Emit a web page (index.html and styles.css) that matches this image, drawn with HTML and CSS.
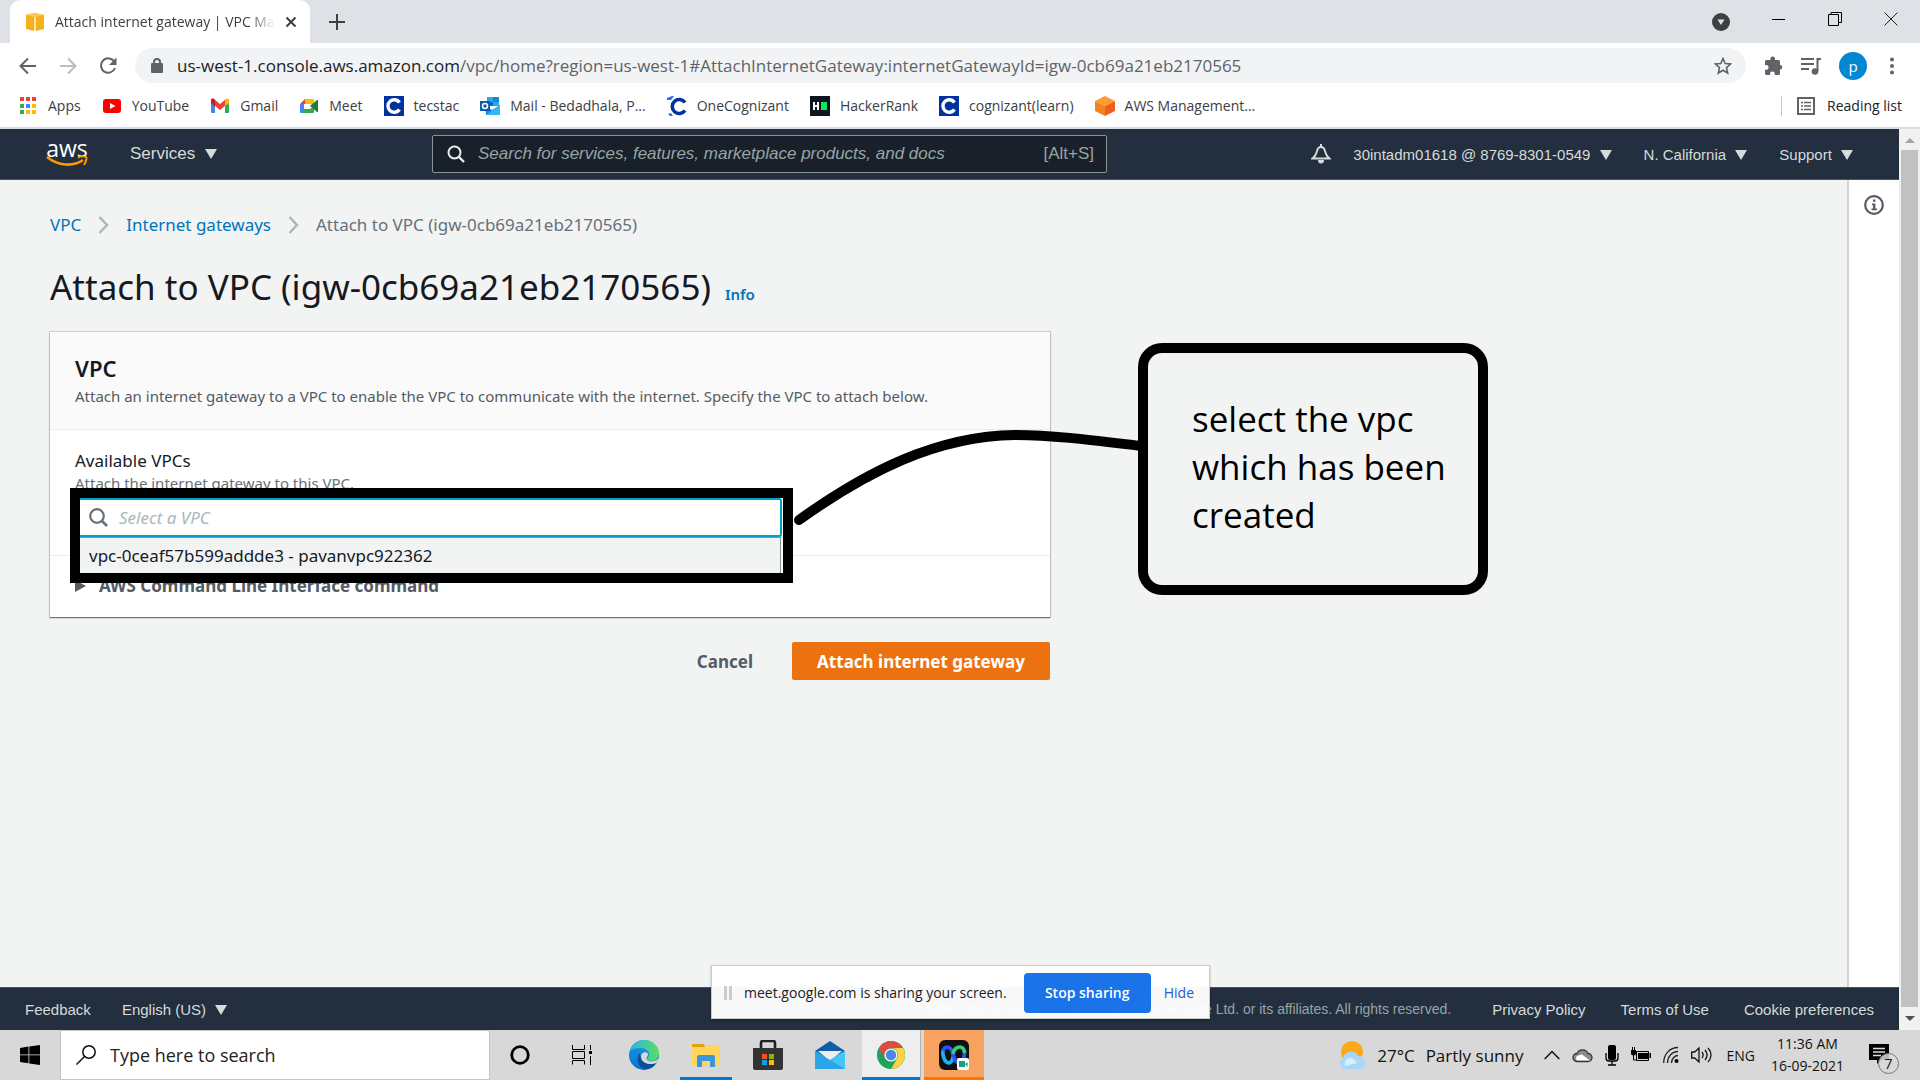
FILE: index.html
```html
<!DOCTYPE html>
<html lang="en">
<head>
<meta charset="utf-8">
<title>Attach internet gateway | VPC Management Console</title>
<link rel="stylesheet" href="styles.css">
</head>
<body>
<div class="tabstrip">
  <div class="tab">
    <svg class="tab-icon" width="20" height="20" viewBox="0 0 20 20"><path fill="#f5b01c" d="M1 3l8.500-2v18L1 17zM10.500 1L19 3v14l-8.500 2z"/><path fill="#fbc94d" d="M1 3l9-2 9 2-9 2.500z"/><path stroke="#fdeec4" d="M10 5.500V19" fill="none"/></svg>
    <span class="tab-title">Attach internet gateway | VPC Ma</span>
    <button class="icon-btn" aria-label="Close tab"><svg width="12" height="12" viewBox="0 0 12 12"><path d="M1.500 1.500l9 9m0-9l-9 9" stroke="#3c4043" stroke-width="2"/></svg></button>
  </div>
  <button class="icon-btn new-tab" aria-label="New tab"><svg width="16" height="16" viewBox="0 0 16 16"><path d="M8 0v16M0 8h16" stroke="#3c4043" stroke-width="2"/></svg></button>
  <div class="window-controls">
    <button class="icon-btn" aria-label="Search tabs"><svg width="18" height="18" viewBox="0 0 18 18"><circle cx="9" cy="9" r="9" fill="#3c4043"/><path d="M5.500 6.500h7L9 12z" fill="#dee1e6"/></svg></button>
    <button class="icon-btn win" aria-label="Minimize"><svg width="14" height="14" viewBox="0 0 14 14"><path d="M0 7.500h13" stroke="#000"/></svg></button>
    <button class="icon-btn win" aria-label="Restore"><svg width="14" height="14" viewBox="0 0 14 14"><path d="M.5 2.500h10v11H.5zM3 2.500v-2h10.500v10H11" fill="none" stroke="#000"/></svg></button>
    <button class="icon-btn win" aria-label="Close"><svg width="14" height="14" viewBox="0 0 14 14"><path d="M.5 .5l13 13m0-13l-13 13" stroke="#222"/></svg></button>
  </div>
</div>

<div class="toolbar">
  <div class="nav-buttons">
    <button class="icon-btn" aria-label="Back"><svg width="18" height="18" viewBox="0 0 18 18"><path d="M17 9H2m7-7.500L1.500 9 9 16.500" fill="none" stroke="#5f6368" stroke-width="2"/></svg></button>
    <button class="icon-btn" aria-label="Forward"><svg width="18" height="18" viewBox="0 0 18 18"><path d="M1 9h15M9 1.500L16.500 9 9 16.500" fill="none" stroke="#bbbdc0" stroke-width="2"/></svg></button>
    <button class="icon-btn" aria-label="Reload"><svg width="18" height="18" viewBox="0 0 18 18"><path d="M15.500 5A7.200 7.200 0 1 0 16 11" fill="none" stroke="#5f6368" stroke-width="2"/><path d="M17.500 .5v7.500H10z" fill="#5f6368"/></svg></button>
  </div>
  <div class="omnibox">
    <svg width="12" height="15" viewBox="0 0 12 15"><rect y="5" width="12" height="10" rx="1" fill="#5f6368"/><path d="M3 6V4a3 3 0 0 1 6 0v2" fill="none" stroke="#5f6368" stroke-width="2"/></svg>
    <span class="url"><b>us-west-1.console.aws.amazon.com</b>/vpc/home?region=us-west-1#AttachInternetGateway:internetGatewayId=igw-0cb69a21eb2170565</span>
    <button class="icon-btn" aria-label="Bookmark this page"><svg width="18" height="18" viewBox="0 0 18 18"><path d="M9 1.500l2.200 5 5.300.5-4 3.600 1.200 5.400L9 13.200 4.300 16l1.200-5.400-4-3.600 5.300-.5z" fill="none" stroke="#5f6368" stroke-width="1.600"/></svg></button>
  </div>
  <button class="icon-btn" aria-label="Extensions"><svg width="19" height="19" viewBox="0 0 19 19"><path fill="#5f6368" d="M16 9V5.500A1.500 1.500 0 0 0 14.500 4H11V2.800a2.300 2.300 0 0 0-4.600 0V4H2.500A1.500 1.500 0 0 0 1 5.500V9h1.200a2.400 2.400 0 0 1 0 4.800H1v3.700A1.500 1.500 0 0 0 2.500 19H6v-1.200a2.400 2.400 0 0 1 4.800 0V19h3.700a1.500 1.500 0 0 0 1.500-1.500v-3.900a2.300 2.300 0 0 0 0-4.600z"/></svg></button>
  <button class="icon-btn" aria-label="Media controls"><svg width="20" height="18" viewBox="0 0 20 18"><path d="M0 2h13M0 7h13M0 12h8" stroke="#5f6368" stroke-width="2"/><path d="M16.500 14V2H20" fill="none" stroke="#5f6368" stroke-width="2"/><circle cx="14" cy="14.500" r="3.300" fill="#5f6368"/></svg></button>
  <button class="avatar">p</button>
  <button class="icon-btn kebab" aria-label="Menu"><svg width="4" height="18" viewBox="0 0 4 18"><g fill="#5f6368"><circle cx="2" cy="2.500" r="2"/><circle cx="2" cy="9" r="2"/><circle cx="2" cy="15.500" r="2"/></g></svg></button>
</div>

<nav class="bookmarks">
  <a href="#"><svg width="18" height="20" viewBox="0 0 18 20"><path fill="#ea4335" d="M0 1h4v4H0zM6 1h4v4H6zM12 1h4v4h-4z"/><path fill="#34a853" d="M0 8h4v4H0z"/><path fill="#4285f4" d="M6 8h4v4H6z"/><path fill="#fbbc04" d="M12 8h4v4h-4zM6 14h4v4H6zM12 14h4v4h-4z"/><path fill="#34a853" d="M0 14h4v4H0z"/></svg>Apps</a>
  <a href="#"><svg width="20" height="20" viewBox="0 0 20 20"><rect x="1" y="3" width="18" height="14" rx="3" fill="#f00"/><path d="M8 7l5.500 3L8 13z" fill="#fff"/></svg>YouTube</a>
  <a href="#"><svg width="20" height="20" viewBox="0 0 20 20"><path fill="#4285f4" d="M1 6h4v11H2a1 1 0 0 1-1-1z"/><path fill="#34a853" d="M15 6h4v10a1 1 0 0 1-1 1h-3z"/><path fill="#ea4335" d="M1 4c0-1 2-2 3-1l6 5 6-5v6l-6 5-5-4-4-3z"/><path fill="#c5221f" d="M1 4c0-1 2-2 4 0v6L1 7z"/><path fill="#fbbc04" d="M19 4c0-1-2-2-4 0v6l4-3z"/></svg>Gmail</a>
  <a href="#"><svg width="20" height="20" viewBox="0 0 20 20"><path fill="#ea4335" d="M1 8l5-5v5z"/><path fill="#fbbc04" d="M6 3h8a1 1 0 0 1 1 1v6l-4-2H6z"/><path fill="#4285f4" d="M1 8h4v9H2a1 1 0 0 1-1-1z"/><path fill="#34a853" d="M5 13h6l4-3v6a1 1 0 0 1-1 1H5z"/><path fill="#188038" d="M11 10l7-6h1v12h-1z"/></svg>Meet</a>
  <a href="#"><svg width="20" height="20" viewBox="0 0 20 20"><path fill="#0033a0" d="M0 0h20v20H0z"/><path d="M15.500 6.500a6.300 6.300 0 1 0 0 7" fill="none" stroke="#fff" stroke-width="3.400"/></svg>tecstac</a>
  <a href="#"><svg width="20" height="20" viewBox="0 0 20 20"><path fill="#0a6ac9" d="M7 1h12v9H7z"/><path fill="#28a8ea" d="M7 1h6v5H7zM13 6h6v4h-6z"/><path fill="#1a86d9" d="M13 1h6v5h-6z"/><path fill="#1490df" d="M5 9l7 5 8-5v9a1 1 0 0 1-1 1H6z"/><path fill="#35b8f1" d="M6 19L20 9v9a1 1 0 0 1-1 1z"/><path fill="#0a5aae" d="M0 5h10v10H0z"/><circle cx="5" cy="10" r="2.500" fill="none" stroke="#fff" stroke-width="1.600"/></svg>Mail - Bedadhala, P...</a>
  <a href="#"><svg width="20" height="20" viewBox="0 0 20 20"><path d="M18 6.500a7 7 0 1 0 0 8" fill="none" stroke="#0033a0" stroke-width="3.600"/><path fill="#2f6bff" d="M0 4V2l5-2h2L4 4zM1 18l3-1 2 3H3z"/></svg>OneCognizant</a>
  <a href="#"><svg width="20" height="20" viewBox="0 0 20 20"><path fill="#0e141e" d="M0 0h20v20H0z"/><path fill="#00ea64" d="M11 6h6v8h-6z"/><path fill="#fff" d="M3 6h2v3h2V6h2v8H7v-3H5v3H3z"/></svg>HackerRank</a>
  <a href="#"><svg width="20" height="20" viewBox="0 0 20 20"><path fill="#0033a0" d="M0 0h20v20H0z"/><path d="M15.500 6.500a6.300 6.300 0 1 0 0 7" fill="none" stroke="#fff" stroke-width="3.400"/></svg>cognizant(learn)</a>
  <a href="#"><svg width="20" height="20" viewBox="0 0 20 20"><path fill="#ff9a2e" d="M10 0l10 5-10 5L0 5z"/><path fill="#f58220" d="M0 5l10 5v10L0 15z"/><path fill="#ec5f1c" d="M20 5l-10 5v10l10-5z"/></svg>AWS Management...</a>
  <a href="#" class="reading"><svg width="18" height="18" viewBox="0 0 18 18"><path d="M1 1h16v16H1z" fill="none" stroke="#5f6368" stroke-width="2"/><path d="M4 5.500h2m1 0h7M4 9h2m1 0h7M4 12.500h2m1 0h7" stroke="#5f6368" stroke-width="1.600"/></svg>Reading list</a>
</nav>

<div class="viewport">
  <div class="console">
    <header class="aws-header">
      <a href="#" class="aws-logo" aria-label="AWS home"><span>aws</span><svg width="42" height="12" viewBox="0 0 42 12"><path d="M1 1c11 9 26 10 36 3" fill="none" stroke="#ff9900" stroke-width="2.600"/><path d="M32 1.500c3-1.500 7-1.500 8-.5s0 5-2 8" fill="none" stroke="#ff9900" stroke-width="2"/></svg></a>
      <button class="menu services">Services <i class="caret"></i></button>
      <label class="aws-search">
        <svg width="18" height="18" viewBox="0 0 18 18"><circle cx="7.500" cy="7.500" r="6" fill="none" stroke="#eaeded" stroke-width="2"/><path d="M12 12l5 5" stroke="#eaeded" stroke-width="2.400"/></svg>
        <input type="text" placeholder="Search for services, features, marketplace products, and docs" aria-label="Search services">
        <span>[Alt+S]</span>
      </label>
      <div class="aws-right">
        <button class="icon-btn" aria-label="Notifications"><svg width="20" height="20" viewBox="0 0 20 20"><path d="M1.500 14.500C5 12 5 10 6 7c.6-2.500 2-4 4-4s3.400 1.500 4 4c1 3 1 5 4.500 7.500z" fill="none" stroke="#d5dbdb" stroke-width="2"/><path d="M9 0h2v3H9zM7 16h6a3 3.500 0 0 1-6 0z" fill="#d5dbdb"/></svg></button>
        <button class="menu">30intadm01618 @ 8769-8301-0549 <i class="caret"></i></button>
        <button class="menu">N. California <i class="caret"></i></button>
        <button class="menu">Support <i class="caret"></i></button>
      </div>
    </header>
    <div class="workspace">
      <main class="content">
        <nav class="crumbs">
          <a href="#">VPC</a>
          <svg width="11" height="18" viewBox="0 0 11 18"><path d="M1.500 1L9 9l-7.500 8" fill="none" stroke="#aab7b8" stroke-width="2.400"/></svg>
          <a href="#">Internet gateways</a>
          <svg width="11" height="18" viewBox="0 0 11 18"><path d="M1.500 1L9 9l-7.500 8" fill="none" stroke="#aab7b8" stroke-width="2.400"/></svg>
          <span>Attach to VPC (igw-0cb69a21eb2170565)</span>
        </nav>
        <div class="title"><h1>Attach to VPC (igw-0cb69a21eb2170565)</h1><a href="#">Info</a></div>
        <form class="form">
          <section class="card">
            <header class="card-head">
              <h2>VPC</h2>
              <p>Attach an internet gateway to a VPC to enable the VPC to communicate with the internet. Specify the VPC to attach below.</p>
            </header>
            <div class="card-body">
              <label for="vpc">Available VPCs</label>
              <p>Attach the internet gateway to this VPC.</p>
              <div class="combo">
                <div class="combo-box">
                  <svg width="19" height="19" viewBox="0 0 19 19"><circle cx="8" cy="8" r="6.800" fill="none" stroke="#687078" stroke-width="2.200"/><path d="M13 13l5 5" stroke="#687078" stroke-width="2.600"/></svg>
                  <input id="vpc" type="text" placeholder="Select a VPC">
                </div>
                <div class="options" role="listbox"><div role="option">vpc-0ceaf57b599addde3 - pavanvpc922362</div></div>
                <div class="frame"></div>
                <svg class="connector" width="350" height="100" viewBox="0 0 350 100"><path d="M8 91C75 43 145 7 224 6c40 0 84 6 126 11" fill="none" stroke="#000" stroke-width="10" stroke-linecap="round"/></svg>
                <div class="callout">select the vpc which has been created</div>
              </div>
            </div>
            <details class="cli"><summary>AWS Command Line Interface command</summary></details>
          </section>
          <div class="actions">
            <button type="button" class="cancel">Cancel</button>
            <button type="button" class="primary">Attach internet gateway</button>
          </div>
        </form>
      </main>
      <aside class="help"><button class="icon-btn" aria-label="Open help"><svg width="20" height="20" viewBox="0 0 20 20"><circle cx="10" cy="10" r="8.800" fill="none" stroke="#545b64" stroke-width="2.200"/><path d="M9 4.500h2.400v2.300H9zM8 8.500h3.400v5H13v1.800H7.500v-1.800H9v-3.200H8z" fill="#545b64"/></svg></button></aside>
    </div>
    <footer class="aws-footer">
      <a href="#">Feedback</a>
      <button class="menu">English (US) <i class="caret"></i></button>
      <span class="legal">© 2008 - 2021, Amazon Internet Services Private Ltd. or its affiliates. All rights reserved.</span>
      <a href="#">Privacy Policy</a>
      <a href="#">Terms of Use</a>
      <a href="#">Cookie preferences</a>
    </footer>
    <div class="sharing">
      <i class="grip"></i>
      <span>meet.google.com is sharing your screen.</span>
      <button class="stop">Stop sharing</button>
      <a href="#">Hide</a>
    </div>
  </div>
  <div class="scrollbar"><i class="up"></i><i class="thumb"></i><i class="down"></i></div>
</div>

<div class="taskbar">
  <button class="task start" aria-label="Start"><svg width="20" height="20" viewBox="0 0 20 20"><path d="M0 3l8.500-1.500v8H0zM9.300 1.400L20 0v9.500H9.300zM0 10.300h8.500v8L0 17zM9.300 10.300H20V20L9.300 18.500z"/></svg></button>
  <label class="task-search">
    <svg width="20" height="20" viewBox="0 0 20 20"><circle cx="13" cy="7" r="6.200" fill="none" stroke="#111" stroke-width="1.500"/><path d="M8.500 11.500L.5 19.500" stroke="#111" stroke-width="1.500"/></svg>
    <input type="text" placeholder="Type here to search" aria-label="Type here to search">
  </label>
  <button class="task" aria-label="Cortana"><svg width="20" height="20" viewBox="0 0 20 20"><circle cx="10" cy="10" r="8.300" fill="none" stroke="#000" stroke-width="2.800"/></svg></button>
  <button class="task" aria-label="Task view"><svg width="20" height="20" viewBox="0 0 20 20"><path d="M.5 0v4.500h12V0M.5 19.500v-4h12v4M.5 6.500h12v7H.5zM18.500 0v5M18.500 11v9" fill="none" stroke="#000"/><path d="M17 6h3v3h-3z"/></svg></button>
  <button class="task" aria-label="Edge"><svg width="30" height="30" viewBox="0 0 30 30"><defs><linearGradient id="e1" x1="0" x2="1"><stop stop-color="#2ab4ea"/><stop offset="1" stop-color="#5be05a"/></linearGradient><linearGradient id="e2" y2="1" x2="0"><stop stop-color="#1a9be6"/><stop offset="1" stop-color="#0b6fd0"/></linearGradient></defs><circle cx="15" cy="15" r="15" fill="url(#e2)"/><path d="M1 11C3 4 9 0 15 0c9 0 15 7 15 13 0 5-4 8-8 8-3 0-4-1-4-2s2-2 2-5c0-3-4-6-9-6-4 0-8 1-10 3z" fill="url(#e1)"/><path d="M11 13c-4 4-3 12 3 16 6 1 11-2 13.500-7-3 1.500-6 1.700-8.500 1-5-1-8-4-8-10z" fill="#0a4f9e"/><path d="M12 16c0-4 6-5 7-2 .5 2-2 3-1.500 5 .5 2 3 2.500 6 2.200 2.500-.2 4.500-1.500 6.500-3.200L28 22.500c-4 2-9 2-12 .3C13 21.500 12 19 12 16z" fill="#d8d8d8"/></svg></button>
  <button class="task open" aria-label="File Explorer"><svg width="28" height="24" viewBox="0 0 28 24"><path fill="#e5a00d" d="M0 1h12l1 3H0z"/><path fill="#ffd65c" d="M0 4h13l2-2h13v20a1 1 0 0 1-1 1H1a1 1 0 0 1-1-1z"/><path fill="#3b97dd" d="M5 24V14a2 2 0 0 1 2-2h14a2 2 0 0 1 2 2v10h-5v-6h-8v6z"/></svg></button>
  <button class="task" aria-label="Store"><svg width="30" height="30" viewBox="0 0 30 30"><path d="M8 10V3a2 2 0 0 1 2-2h10a2 2 0 0 1 2 2v7" fill="none" stroke="#222" stroke-width="2.600"/><path fill="#333" d="M0 8h30v20a2 2 0 0 1-2 2H2a2 2 0 0 1-2-2z"/><path fill="#f25022" d="M9 14h5v5H9z"/><path fill="#7fba00" d="M16 14h5v5h-5z"/><path fill="#00a4ef" d="M9 20h5v5H9z"/><path fill="#ffb900" d="M16 20h5v5h-5z"/></svg></button>
  <button class="task" aria-label="Mail"><svg width="30" height="28" viewBox="0 0 30 28"><path fill="#0f5ea8" d="M0 10L15 0l15 10-15 9z"/><path fill="#eee" d="M3 10h24L15 20z"/><path fill="#2aa5e6" d="M0 10l15 9 15-9v18H0z"/><path fill="#41c7f5" d="M30 10v18L15 19z"/></svg></button>
  <button class="task open active" aria-label="Chrome"><svg width="28" height="28" viewBox="0 0 28 28"><circle cx="14" cy="14" r="14" fill="#1ea35b"/><path fill="#e04a3f" d="M1.900 7A14 14 0 0 1 26.100 7H14a7 7 0 0 0-6 3.500L8 17.500z"/><path fill="#fdd247" d="M26.100 7A14 14 0 0 1 14 28l6.100-10.500A7 7 0 0 0 14 7z"/><circle cx="14" cy="14" r="6.600" fill="#f4f4f4"/><circle cx="14" cy="14" r="5.200" fill="#4a86e8"/></svg></button>
  <button class="task webex" aria-label="Webex"><svg width="30" height="30" viewBox="0 0 30 30"><rect width="30" height="30" rx="6" fill="#111114"/><path d="M4 10c-1 6 2 13 6 13 4-1 5-8 4-12" fill="none" stroke="#19b4f0" stroke-width="3.600"/><path d="M4 11c1-5 7-5 9 0 2 6 3 12 7 12 5-1 6-8 5-13" fill="none" stroke="#2b56f0" stroke-width="3.600"/><path d="M14 14c1-5 4-7 7-7 3 0 4 2 5 6" fill="none" stroke="#36d07c" stroke-width="3.600"/><rect x="18" y="18" width="12" height="12" rx="2" fill="#fff"/><path fill="#1a9d7a" d="M20 21h6v6h-6zM26 24l2.500-2v5z"/></svg></button>
  <div class="tray">
    <button class="weather"><svg width="28" height="29" viewBox="0 0 28 29"><circle cx="14" cy="11" r="11" fill="#fba919"/><path fill="#a9d8f7" d="M6 28a6 6 0 0 1-1-11 8 8 0 0 1 15-2 6.500 6.500 0 0 1 2 13z"/><path fill="#d9effc" d="M7 25a6 6 0 0 1 5-8c3 0 5 2 7 5z"/></svg><span>27°C</span><span>Partly sunny</span></button>
    <div class="tray-icons">
      <svg width="16" height="10" viewBox="0 0 16 10"><path d="M.7 9L8 1.500 15.300 9" fill="none" stroke="#111" stroke-width="1.500"/></svg>
      <svg width="21" height="16" viewBox="0 0 21 16"><path d="M5 14.500a4 4 0 0 1 0-8 6 6 0 0 1 11 0 4 4 0 0 1 0 8z" fill="#8c8c8c" stroke="#333" stroke-width="1.300"/><path d="M5 13.500a3 3 0 0 1 1-5l4-1 8 6z" fill="#fff"/></svg>
      <svg width="14" height="21" viewBox="0 0 14 21"><rect x="3" width="8" height="15" rx="2"/><path d="M1 8v5a3 3 0 0 0 3 3h6a3 3 0 0 0 3-3V8M7 16v4M3 20h8" fill="none" stroke="#000" stroke-width="1.300"/></svg>
      <svg width="20" height="16" viewBox="0 0 20 16"><path d="M7 6h10v6H7zM0 3h5v3a2.500 2.500 0 0 1-5 0zM1 0h1v3H1zM3 0h1v3H3zM18.500 6H20v5h-1.500z"/><path d="M5.500 4.500h12v9h-12zM2.500 7v6H5" fill="none" stroke="#000"/></svg>
      <svg width="16" height="18" viewBox="0 0 16 18"><path d="M.7 17C.7 8 7 1.500 15 1.500M4.500 17C4.500 10.500 9 5.500 15 5.500M8.500 17c0-4 3-7.500 6.500-7.500" fill="none" stroke="#222" stroke-width="1.300"/><circle cx="13.500" cy="15" r="2"/></svg>
      <svg width="21" height="18" viewBox="0 0 21 18"><path d="M.7 6h3L8 2v14l-4.300-4h-3zM11 6c1.500 2 1.500 4 0 6M14 4c2.500 3 2.500 7 0 10M17 2c4 4 4 10 0 14" fill="none" stroke="#111" stroke-width="1.300"/></svg>
    </div>
    <span class="lang">ENG</span>
    <div class="clock"><span>11:36 AM</span><span>16-09-2021</span></div>
    <button class="notif" aria-label="Notifications"><svg width="32" height="32" viewBox="0 0 32 32"><path d="M1 1h20v16h-8l-4 4v-4H1z"/><path d="M5 5.500h12M5 9h12M5 12.500h8" stroke="#ddd" stroke-width="1.500"/><circle cx="20.500" cy="20.500" r="10" fill="#d9d9d9" fill-opacity=".85" stroke="#777"/></svg><span>7</span></button>
  </div>
</div>
</body>
</html>
```
FILE: styles.css
```css
* { box-sizing: border-box; }
body { margin: 0; height: 100vh; display: flex; flex-direction: column; overflow: hidden; background: #fff; font-family: "Open Sans", "Noto Sans", sans-serif; color: #16191f; }
button, input { font: inherit; color: inherit; border: 0; padding: 0; background: none; }
a { text-decoration: none; color: inherit; }
svg { display: block; flex: none; }
h1, h2, p { margin: 0; font-weight: 400; }
.icon-btn { display: flex; align-items: center; justify-content: center; }

.tabstrip { height: 43px; flex: none; display: flex; align-items: center; background: #dee1e6; font-size: 14px; }
.tab { align-self: stretch; width: 300px; margin-left: 10px; padding: 0 15px; display: flex; align-items: center; gap: 10px; background: #fff; border-radius: 10px 10px 0 0; color: #3c4043; }
.tab-title { flex: 1; white-space: nowrap; -webkit-mask-image: linear-gradient(90deg, #000 88%, transparent); mask-image: linear-gradient(90deg, #000 88%, transparent); }
.new-tab { margin-left: 19px; }
.window-controls { margin-left: auto; display: flex; align-items: center; padding-right: 22px; gap: 42px; }
.win { width: 14px; height: 20px; align-items: flex-start; }

.toolbar { height: 45px; flex: none; display: flex; align-items: center; padding: 0 26px 0 19px; gap: 18px; }
.nav-buttons { display: flex; gap: 22px; }
.omnibox { flex: 1; height: 35px; display: flex; align-items: center; gap: 14px; padding: 0 14px 0 16px; background: #f1f3f4; border-radius: 18px; font-size: 17px; color: #5f6368; }
.url { flex: 1; white-space: nowrap; overflow: hidden; }
.url b { font-weight: 400; color: #202124; }
.avatar { width: 28px; height: 28px; border-radius: 50%; background: #0288d1; color: #fff; font-size: 15px; line-height: 24px; }
.kebab { margin-left: 5px; }

.bookmarks { height: 41px; flex: none; display: flex; align-items: center; gap: 21px; padding: 0 18px 4px 20px; border-bottom: 2px solid #dadce0; font-size: 14px; color: #3c4043; white-space: nowrap; }
.bookmarks a { display: flex; align-items: center; gap: 10px; }
.bookmarks .reading { margin-left: auto; height: 20px; padding-left: 15px; gap: 12px; border-left: 1px solid #c4c7cc; color: #202124; }

.viewport { flex: 1; min-height: 0; display: flex; }
.console { flex: 1; min-width: 0; display: flex; flex-direction: column; position: relative; }
.caret { display: inline-block; margin-left: 5px; border: 6px solid transparent; border-top: 10px solid #d5dbdb; border-bottom: 0; }
.menu { white-space: nowrap; }

.aws-header { height: 51px; flex: none; display: flex; align-items: center; padding: 0 46px; background: #232f3e; border-bottom: 1px solid #49525e; font-family: "Liberation Sans", Arial, sans-serif; font-size: 15px; color: #d5dbdb; }
.aws-logo { width: 42px; color: #fff; font: 500 23px/16px "Open Sans", sans-serif; text-align: center; }
.services { margin-left: 42px; font-size: 17px; width: 302px; text-align: left; }
.aws-search { width: 675px; height: 38px; display: flex; align-items: center; gap: 13px; padding: 0 12px 0 14px; border: 1px solid #879596; border-radius: 2px; background: #1a2029; color: #95a5a6; font-size: 17px; }
.aws-search input { flex: 1; outline: 0; font-style: italic; }
.aws-search input::placeholder { color: #95a5a6; opacity: 1; }
.aws-right { margin-left: auto; display: flex; align-items: center; gap: 32px; }
.aws-right .icon-btn { margin-right: -10px; }

.workspace { flex: 1; min-height: 0; display: flex; background: #f2f3f3; font-family: "Noto Sans", "Open Sans", sans-serif; }
.content { flex: 1; padding: 33px 50px; }
.help { width: 52px; border-left: 2px solid #d0d4d6; background: #fff; padding-top: 15px; display: flex; justify-content: center; align-items: flex-start; }
.crumbs { display: flex; align-items: center; gap: 17px; font-size: 17px; line-height: 24px; color: #687078; white-space: nowrap; }
.crumbs a { color: #0073bb; }
.title { display: flex; align-items: baseline; gap: 14px; margin-top: 27px; white-space: nowrap; }
.title h1 { font-size: 35px; line-height: 46px; }
.title a { font-size: 15px; font-weight: 600; color: #0073bb; }
.form { width: 1000px; margin-top: 22px; }
.card { background: #fff; box-shadow: 0 1px 1px 0 rgba(0,28,36,.5), 0 0 1px 1px rgba(0,28,36,.15); }
.card-head { padding: 21px 25px 19px; background: #fafafa; border-bottom: 1px solid #eaeded; }
.card-head h2 { font-size: 22px; font-weight: 600; line-height: 30px; }
.card-head p, .card-body p { font-size: 15px; line-height: 27px; color: #545b64; white-space: nowrap; }
.card-body { padding: 19px 25px 18px; border-bottom: 1px solid #eaeded; }
.card-body label { display: block; font-size: 17px; line-height: 24px; }
.card-body p { line-height: 20px; color: #687078; }
.combo { position: relative; width: 707px; margin-top: 5px; height: 39px; }
.combo-box { height: 39px; display: flex; align-items: center; gap: 11px; padding-left: 12px; border: 2px solid #00a1c9; border-radius: 3px; background: #fff; font-size: 17px; }
.combo input { flex: 1; outline: 0; }
.combo input::placeholder { color: #aab7b8; opacity: 1; font-style: italic; }
.options { position: absolute; z-index: 1; top: 39px; left: 0; right: 1px; height: 37px; padding-left: 13px; border: 1px solid #879596; background: #f2f3f3; font-size: 17px; line-height: 35px; }
.frame { position: absolute; z-index: 2; left: -5px; top: -10px; width: 723px; height: 95px; border: 10px solid #000; }
.connector { position: absolute; z-index: 2; left: 716px; top: -69px; }
.callout { position: absolute; z-index: 2; left: 1063px; top: -155px; width: 350px; height: 252px; padding: 42px 25px 42px 44px; border: 10px solid #000; border-radius: 24px; color: #000; font-family: "Open Sans", sans-serif; font-size: 35px; line-height: 48px; }
.cli { padding: 17px 25px 18px; font-size: 17px; font-weight: 700; line-height: 26px; color: #545b64; }
.cli summary { list-style: none; display: flex; align-items: center; gap: 13px; }
.cli summary::before { content: ""; border: 6px solid transparent; border-left: 11px solid #545b64; border-right: 0; }
.actions { display: flex; justify-content: flex-end; align-items: center; gap: 39px; margin-top: 25px; font-size: 17px; font-weight: 700; }
.cancel { color: #545b64; }
.primary { height: 38px; width: 258px; border-radius: 2px; background: #ec7211; color: #fff; }

.aws-footer { height: 43px; flex: none; display: flex; align-items: center; gap: 35px; padding: 0 25px; background: #232f3e; border-top: 1px solid #49525e; font: 15px "Liberation Sans", Arial, sans-serif; color: #d5dbdb; white-space: nowrap; }
.aws-footer .menu { margin-left: -4px; }
.legal { margin-left: auto; margin-right: 6px; font-size: 14px; color: #95a5a6; }
.sharing { position: absolute; left: 711px; bottom: 11px; width: 499px; height: 54px; display: flex; align-items: center; padding: 1px 15px 0 12px; background: rgba(255,255,255,.97); border: 1px solid #c9cccd; box-shadow: 0 1px 2px rgba(0,0,0,.3); font-size: 14px; white-space: nowrap; color: #202124; }
.grip { width: 8px; height: 14px; margin-right: 12px; border: solid #ccc; border-width: 0 3px; }
.stop { width: 127px; height: 40px; margin-left: auto; border-radius: 4px; background: #1a73e8; color: #fff; font-weight: 600; }
.sharing a { margin-left: 13px; color: #1a5fd8; }

.scrollbar { width: 21px; flex: none; display: flex; flex-direction: column; align-items: center; padding: 9px 0; background: #f1f1f1; }
.up { border: 5px solid transparent; border-bottom: 5px solid #a3a3a3; border-top: 0; }
.thumb { flex: 1; width: 17px; margin: 7px 0 9px; background: #c1c1c1; }
.down { border: 5px solid transparent; border-top: 5px solid #505050; border-bottom: 0; }

.taskbar { height: 50px; flex: none; display: flex; background: #d8d8d8; color: #111; }
.task { width: 60px; margin-right: 2px; display: flex; align-items: center; justify-content: center; border-bottom: 3px solid transparent; border-top: 3px solid transparent; }
.start { margin: 0; }
.task-search { width: 430px; display: flex; align-items: center; gap: 14px; padding: 0 15px; background: #fff; border: 1px solid #c4c4c4; font-size: 18px; }
.task-search input { flex: 1; outline: 0; }
.task-search input::placeholder { color: #222; opacity: 1; }
.open { width: 52px; margin: 0 6px 0 4px; border-bottom-color: #0078d7; }
.active { width: 58px; margin: 0 4px 0 0; background: #eee; box-shadow: 1px 0 #b5b5b5; }
.webex { background: #f8a25f; border-top-color: #f8a25f; border-bottom-color: #ff7300; }
.active { border-top-color: #eee; }
.tray { margin-left: auto; display: flex; align-items: center; padding-right: 20px; white-space: nowrap; }
.weather { display: flex; align-items: center; gap: 11px; font-size: 17px; }
.tray-icons { display: flex; align-items: center; gap: 12px; margin: 0 14px 0 21px; }
.lang { font-size: 14px; }
.clock { display: flex; flex-direction: column; align-items: center; margin: 0 24px 0 16px; font-size: 14px; line-height: 22px; }
.notif { display: grid; margin-top: 8px; }
.notif svg, .notif span { grid-area: 1 / 1; }
.notif span { padding: 11px 0 0 9px; font-size: 14px; line-height: 20px; }
```
